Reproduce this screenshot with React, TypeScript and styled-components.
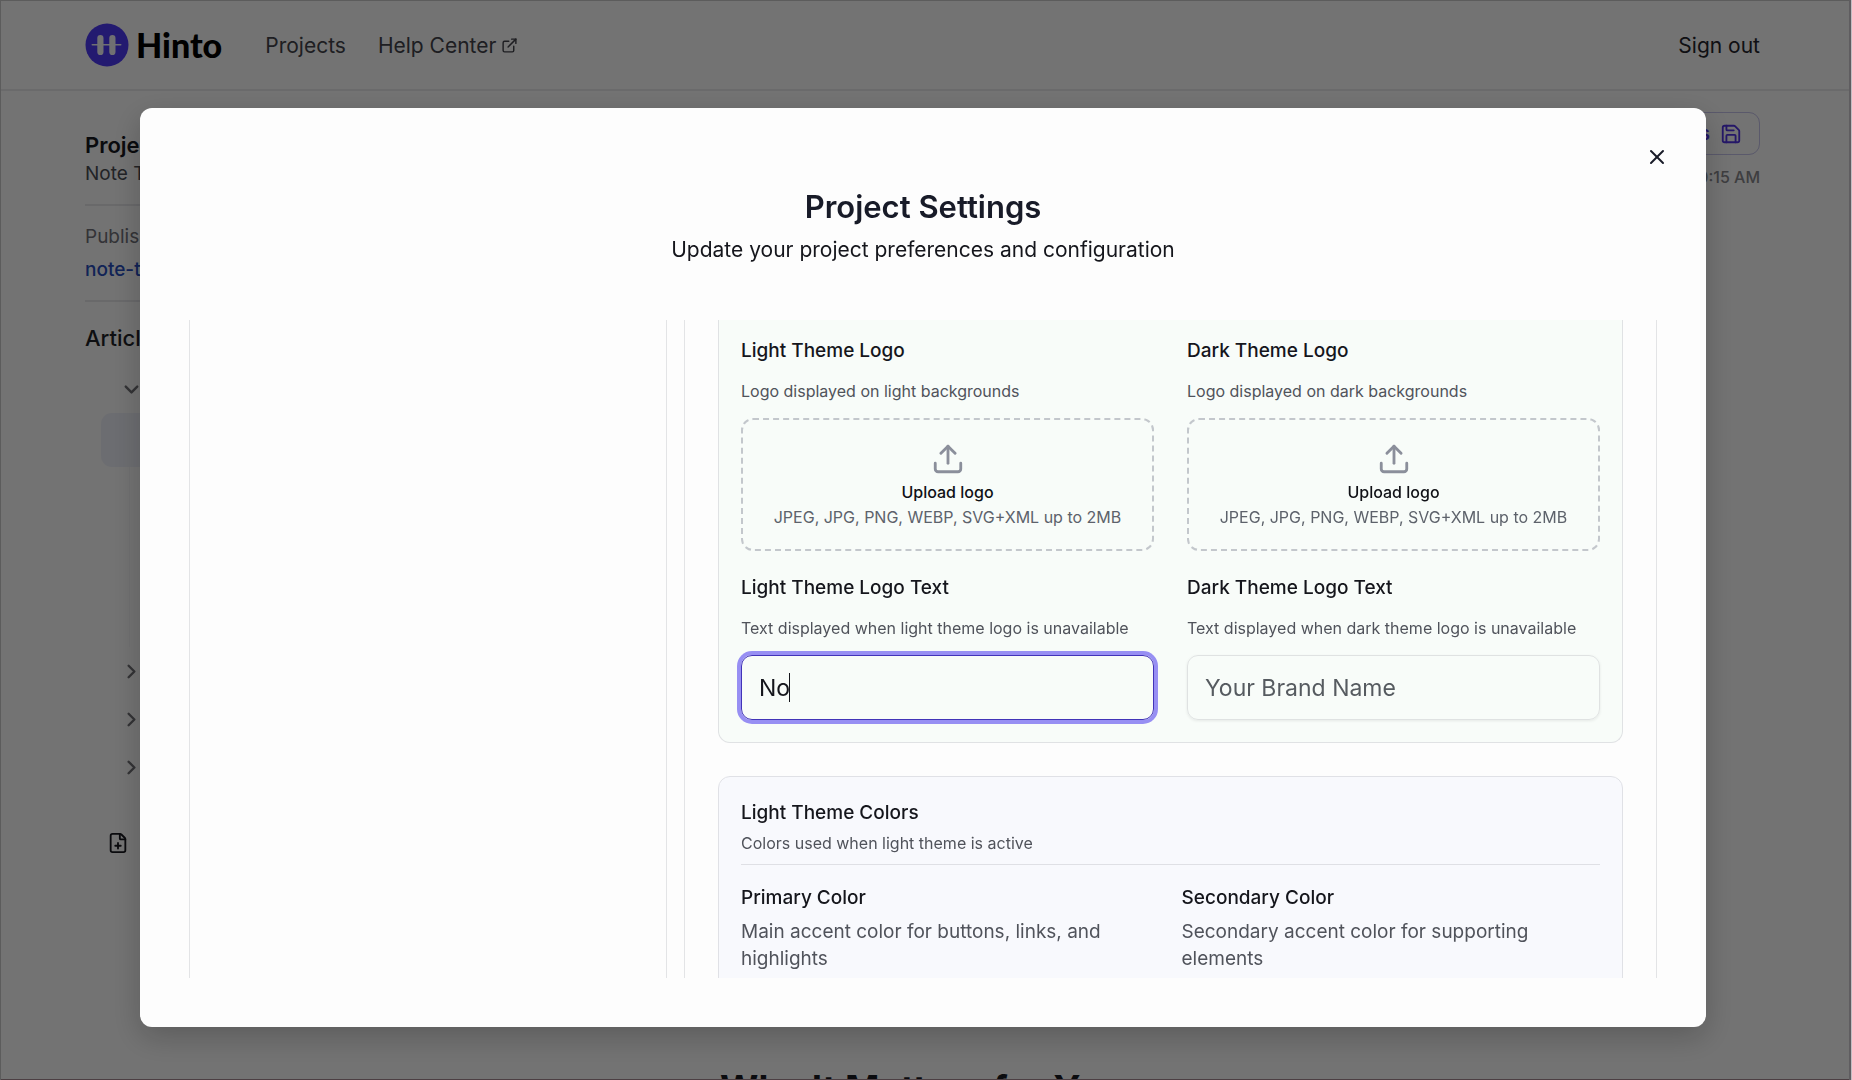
import React, { useState } from "react";
import styled, { createGlobalStyle } from "styled-components";
import { ChevronDown, ChevronRight, ExternalLink, FilePlus, Save, Upload, X } from "lucide-react";

const GlobalStyle = createGlobalStyle`
  *, *::before, *::after { box-sizing: border-box; }
  body {
    margin: 0;
    background: #e6e6e6;
    color: #15161c;
    font-family: Inter, "Liberation Sans", sans-serif;
    -webkit-font-smoothing: antialiased;
  }
  h1, h2, h3, p { margin: 0; }
  button, input { font-family: inherit; }
`;

const Page = styled.div`
  display: flex;
  flex-direction: column;
  height: 100vh;
  overflow: hidden;
`;

const Header = styled.header`
  display: flex;
  align-items: center;
  flex: none;
  height: 91px;
  padding: 0 92px 0 85px;
  border-bottom: 2px solid #d4d4d6;
`;

const Brand = styled.a`
  display: flex;
  align-items: center;
  gap: 7px;
  color: #000;
  font-family: Lato, sans-serif;
  font-size: 34px;
  font-weight: 900;
  line-height: 44px;
  text-decoration: none;
`;

const Nav = styled.nav`
  display: flex;
  gap: 32px;
  margin-left: 43px;
  padding-top: 2px;
`;

const NavLink = styled.a`
  display: flex;
  align-items: center;
  gap: 5px;
  color: #3c3d44;
  font-size: 21px;
  line-height: 30px;
  text-decoration: none;
`;

const SignOut = styled.button`
  margin-left: auto;
  padding: 2px 0 0;
  border: 0;
  background: none;
  color: #202126;
  font-size: 21px;
  line-height: 30px;
`;

const Body = styled.div`
  display: flex;
  flex: 1;
  min-height: 0;
  padding: 0 92px 0 85px;
`;

const Sidebar = styled.aside`
  flex: none;
  width: 440px;
  padding-top: 39px;
`;

const SideBlock = styled.section`
  padding-bottom: 16px;
  margin-bottom: 17px;
  border-bottom: 2px solid #d2d2d5;
`;

const SideTitle = styled.h2`
  font-size: 22px;
  font-weight: 600;
  line-height: 30px;
`;

const TreeTitle = styled.h2`
  margin-top: 21px;
  color: #1d1e24;
  font-size: 22px;
  font-weight: 500;
  line-height: 30px;
`;

const SideText = styled.p<{ $muted?: boolean }>`
  margin-bottom: ${(p) => (p.$muted ? "5px" : "0")};
  color: ${(p) => (p.$muted ? "#66676e" : "#45464d")};
  font-size: 19px;
  line-height: 28px;
`;

const SideLink = styled.a`
  display: block;
  color: #2447ad;
  font-size: 19px;
  font-weight: 500;
  line-height: 28px;
  text-decoration: none;
`;

const Tree = styled.ul`
  margin: 12px 0 0;
  padding: 0 0 0 16px;
  list-style: none;
`;

const TreeRow = styled.li`
  display: flex;
  align-items: center;
  height: 48px;
  padding-left: 19px;
  color: #66666b;
`;

const ActiveRow = styled.li`
  height: 54px;
  border-radius: 11px;
  background: #d9dbe2;
`;

const TreeBranch = styled.li`
  height: 180px;
  margin-left: 28px;
  border-left: 1px solid #e0e0e1;
`;

const AddArticle = styled.button`
  display: flex;
  align-items: center;
  height: 48px;
  margin-top: 28px;
  padding: 0 0 0 22px;
  border: 0;
  background: none;
  color: #15161c;
`;

const Main = styled.main`
  display: flex;
  flex: 1;
  flex-direction: column;
  padding-top: 21px;
`;

const Publish = styled.div`
  display: flex;
  flex-direction: column;
  align-items: flex-end;
  gap: 10px;
  color: #7c7c81;
  font-size: 16px;
  font-weight: 500;
  line-height: 24px;
`;

const OutlineButton = styled.button`
  display: flex;
  align-items: center;
  gap: 10px;
  height: 43px;
  padding: 0 17px;
  border: 1px solid #b4b2d6;
  border-radius: 11px;
  background: none;
  color: #4a2fd0;
  font-size: 19px;
  font-weight: 600;
`;

const ArticleHeading = styled.h2`
  margin: 882px 0 0 195px;
  font-size: 37px;
  font-weight: 700;
  line-height: 36px;
  white-space: nowrap;
`;

const Overlay = styled.div`
  position: fixed;
  inset: 0;
  display: flex;
  padding: 108px 146px 53px 140px;
  background: rgba(0, 0, 0, 0.5);
  box-shadow: inset -1px 0 #c3bdc2, inset -3px 0 #5f5d60, inset 1px 1px #5c5c5c, inset 0 -1px #4c3f43;
`;

const Dialog = styled.section`
  position: relative;
  display: flex;
  flex: 1;
  flex-direction: column;
  min-width: 0;
  padding: 81px 49px 49px;
  border-radius: 12px;
  background: #fdfdfd;
  box-shadow: 0 10px 30px rgba(0, 0, 0, 0.2);
`;

const Close = styled.button`
  position: absolute;
  top: 37px;
  right: 37px;
  display: flex;
  padding: 0;
  border: 0;
  background: none;
  color: #181b28;
`;

const DialogHead = styled.header`
  padding-bottom: 55px;
  text-align: center;
`;

const DialogTitle = styled.h1`
  color: #181b28;
  font-size: 31px;
  font-weight: 600;
  line-height: 36px;
`;

const DialogSub = styled.p`
  margin-top: 10px;
  font-size: 21px;
  line-height: 30px;
`;

const Panels = styled.div`
  display: grid;
  grid-template-columns: 478fr 973fr;
  grid-auto-rows: max-content;
  flex: 1;
  gap: 17px;
  min-height: 0;
  overflow: hidden;
`;

const Panel = styled.div`
  border: solid #e3e4e6;
  border-width: 0 1px;
  padding: 0 33px;
`;

const LogoCard = styled.section`
  display: grid;
  grid-template-columns: 1fr 1fr;
  column-gap: 33px;
  padding: 16px 22px 22px;
  border: 1px solid #e0e2e4;
  border-top: 0;
  border-radius: 0 0 12px 12px;
  background: #f8fcf9;
`;

const Field = styled.div`
  display: flex;
  flex-direction: column;
  min-width: 0;
`;

const Label = styled.label`
  font-size: 19px;
  font-weight: 500;
  line-height: 30px;
`;

const Hint = styled.p<{ $tight?: boolean }>`
  margin: ${(p) => (p.$tight ? "3px 0 0" : "13px 0 15px")};
  color: #50535b;
  font-size: 16px;
  line-height: 24px;
`;

const DropZone = styled.button`
  display: flex;
  flex-direction: column;
  align-items: center;
  height: 133px;
  margin-bottom: 22px;
  padding: 22px 0 0;
  border: 2px dashed #c3c7cc;
  border-radius: 12px;
  background: none;
  color: #5d626b;
  font-size: 16px;
  line-height: 25px;

  svg { color: #8b8f9b; }
  strong { margin-top: 4px; color: #101116; font-weight: 500; }
`;

const InputWrap = styled.div`
  position: relative;
  display: flex;
`;

const Input = styled.input<{ $active?: boolean }>`
  width: 100%;
  height: 65px;
  padding: 1px 17px 0;
  border: 1px solid ${(p) => (p.$active ? "#4234b8" : "#dfe2e2")};
  border-radius: 11px;
  outline: 0;
  background: transparent;
  box-shadow: ${(p) => (p.$active ? "0 0 0 4px #978ff3" : "0 1px 3px rgba(0, 0, 0, 0.08)")};
  color: #15161c;
  font-size: 23px;
  caret-color: transparent;

  &::placeholder { color: #565b60; opacity: 1; }
`;

const Caret = styled.span`
  position: absolute;
  top: 18px;
  left: 48px;
  width: 1px;
  height: 29px;
  background: #15161c;
`;

const ColorCard = styled.section`
  height: 420px;
  margin-top: 33px;
  padding: 21px 22px 22px;
  border: 1px solid #e0e1e6;
  border-radius: 12px;
  background: #f8f9fd;
`;

const CardHead = styled.header`
  padding-bottom: 9px;
  border-bottom: 1px solid #dfe0e5;
`;

const CardTitle = styled.h2`
  font-size: 19px;
  font-weight: 500;
  line-height: 30px;
`;

const ColorGrid = styled.div`
  display: grid;
  grid-template-columns: 1fr 1fr;
  gap: 22px;
  padding-top: 18px;
`;

const ColorText = styled.p`
  margin-top: 5px;
  color: #50535b;
  font-size: 19px;
  line-height: 27px;
`;

const LogoMark = () => (
  <svg width="44" height="44" viewBox="0 0 44 44" aria-hidden="true">
    <circle cx="22" cy="22" r="21.5" fill="#4734e0" />
    <g fill="#e0e0e4">
      <rect x="12.3" y="12" width="6.2" height="20" rx="3.1" />
      <rect x="24.3" y="12" width="6.2" height="20" rx="3.1" />
      <rect x="6.5" y="21" width="30" height="1.6" rx="0.8" />
    </g>
  </svg>
);

const UploadField = ({ id, label, hint }: { id: string; label: string; hint: string }) => (
  <Field>
    <Label htmlFor={id}>{label}</Label>
    <Hint>{hint}</Hint>
    <DropZone id={id} type="button">
      <Upload size={34} strokeWidth={2} />
      <strong>Upload logo</strong>
      <span>JPEG, JPG, PNG, WEBP, SVG+XML up to 2MB</span>
    </DropZone>
  </Field>
);

interface TextFieldProps {
  id: string;
  label: string;
  hint: string;
  initial?: string;
  active?: boolean;
}

const TextField = ({ id, label, hint, initial = "", active }: TextFieldProps) => {
  const [value, setValue] = useState(initial);
  return (
    <Field>
      <Label htmlFor={id}>{label}</Label>
      <Hint>{hint}</Hint>
      <InputWrap>
        <Input
          id={id}
          type="text"
          placeholder="Your Brand Name"
          value={value}
          onChange={(e) => setValue(e.target.value)}
          $active={active}
        />
        {active && <Caret />}
      </InputWrap>
    </Field>
  );
};

const ColorField = ({ title, text }: { title: string; text: string }) => (
  <div>
    <CardTitle as="h3">{title}</CardTitle>
    <ColorText>{text}</ColorText>
  </div>
);

export default function App() {
  return (
    <>
      <GlobalStyle />
      <Page>
        <Header>
          <Brand href="#">
            <LogoMark />
            Hinto
          </Brand>
          <Nav>
            <NavLink href="#">Projects</NavLink>
            <NavLink href="#">
              Help Center
              <ExternalLink size={17} />
            </NavLink>
          </Nav>
          <SignOut type="button">Sign out</SignOut>
        </Header>
        <Body>
          <Sidebar>
            <SideBlock>
              <SideTitle>Project</SideTitle>
              <SideText>Note T</SideText>
            </SideBlock>
            <SideBlock>
              <SideText $muted>Publish</SideText>
              <SideLink href="#">note-t</SideLink>
            </SideBlock>
            <TreeTitle>Articles</TreeTitle>
            <Tree>
              <TreeRow><ChevronDown size={23} strokeWidth={2.5} /></TreeRow>
              <ActiveRow />
              <TreeBranch />
              <TreeRow><ChevronRight size={23} strokeWidth={2.5} /></TreeRow>
              <TreeRow><ChevronRight size={23} strokeWidth={2.5} /></TreeRow>
              <TreeRow><ChevronRight size={23} strokeWidth={2.5} /></TreeRow>
            </Tree>
            <AddArticle type="button" aria-label="Add article">
              <FilePlus size={22} />
            </AddArticle>
          </Sidebar>
          <Main>
            <Publish>
              <OutlineButton type="button">
                Changes
                <Save size={22} />
              </OutlineButton>
              <span>10:15 AM</span>
            </Publish>
            <ArticleHeading>Why It Matters for You</ArticleHeading>
          </Main>
        </Body>
      </Page>
      <Overlay>
        <Dialog role="dialog" aria-modal="true" aria-labelledby="dialog-title">
          <Close type="button" aria-label="Close">
            <X size={24} />
          </Close>
          <DialogHead>
            <DialogTitle id="dialog-title">Project Settings</DialogTitle>
            <DialogSub>Update your project preferences and configuration</DialogSub>
          </DialogHead>
          <Panels>
            <Panel />
            <Panel>
              <LogoCard>
                <UploadField id="light-logo" label="Light Theme Logo" hint="Logo displayed on light backgrounds" />
                <UploadField id="dark-logo" label="Dark Theme Logo" hint="Logo displayed on dark backgrounds" />
                <TextField
                  id="light-text"
                  label="Light Theme Logo Text"
                  hint="Text displayed when light theme logo is unavailable"
                  initial="No"
                  active
                />
                <TextField
                  id="dark-text"
                  label="Dark Theme Logo Text"
                  hint="Text displayed when dark theme logo is unavailable"
                />
              </LogoCard>
              <ColorCard>
                <CardHead>
                  <CardTitle>Light Theme Colors</CardTitle>
                  <Hint $tight>Colors used when light theme is active</Hint>
                </CardHead>
                <ColorGrid>
                  <ColorField title="Primary Color" text="Main accent color for buttons, links, and highlights" />
                  <ColorField title="Secondary Color" text="Secondary accent color for supporting elements" />
                </ColorGrid>
              </ColorCard>
            </Panel>
          </Panels>
        </Dialog>
      </Overlay>
    </>
  );
}
